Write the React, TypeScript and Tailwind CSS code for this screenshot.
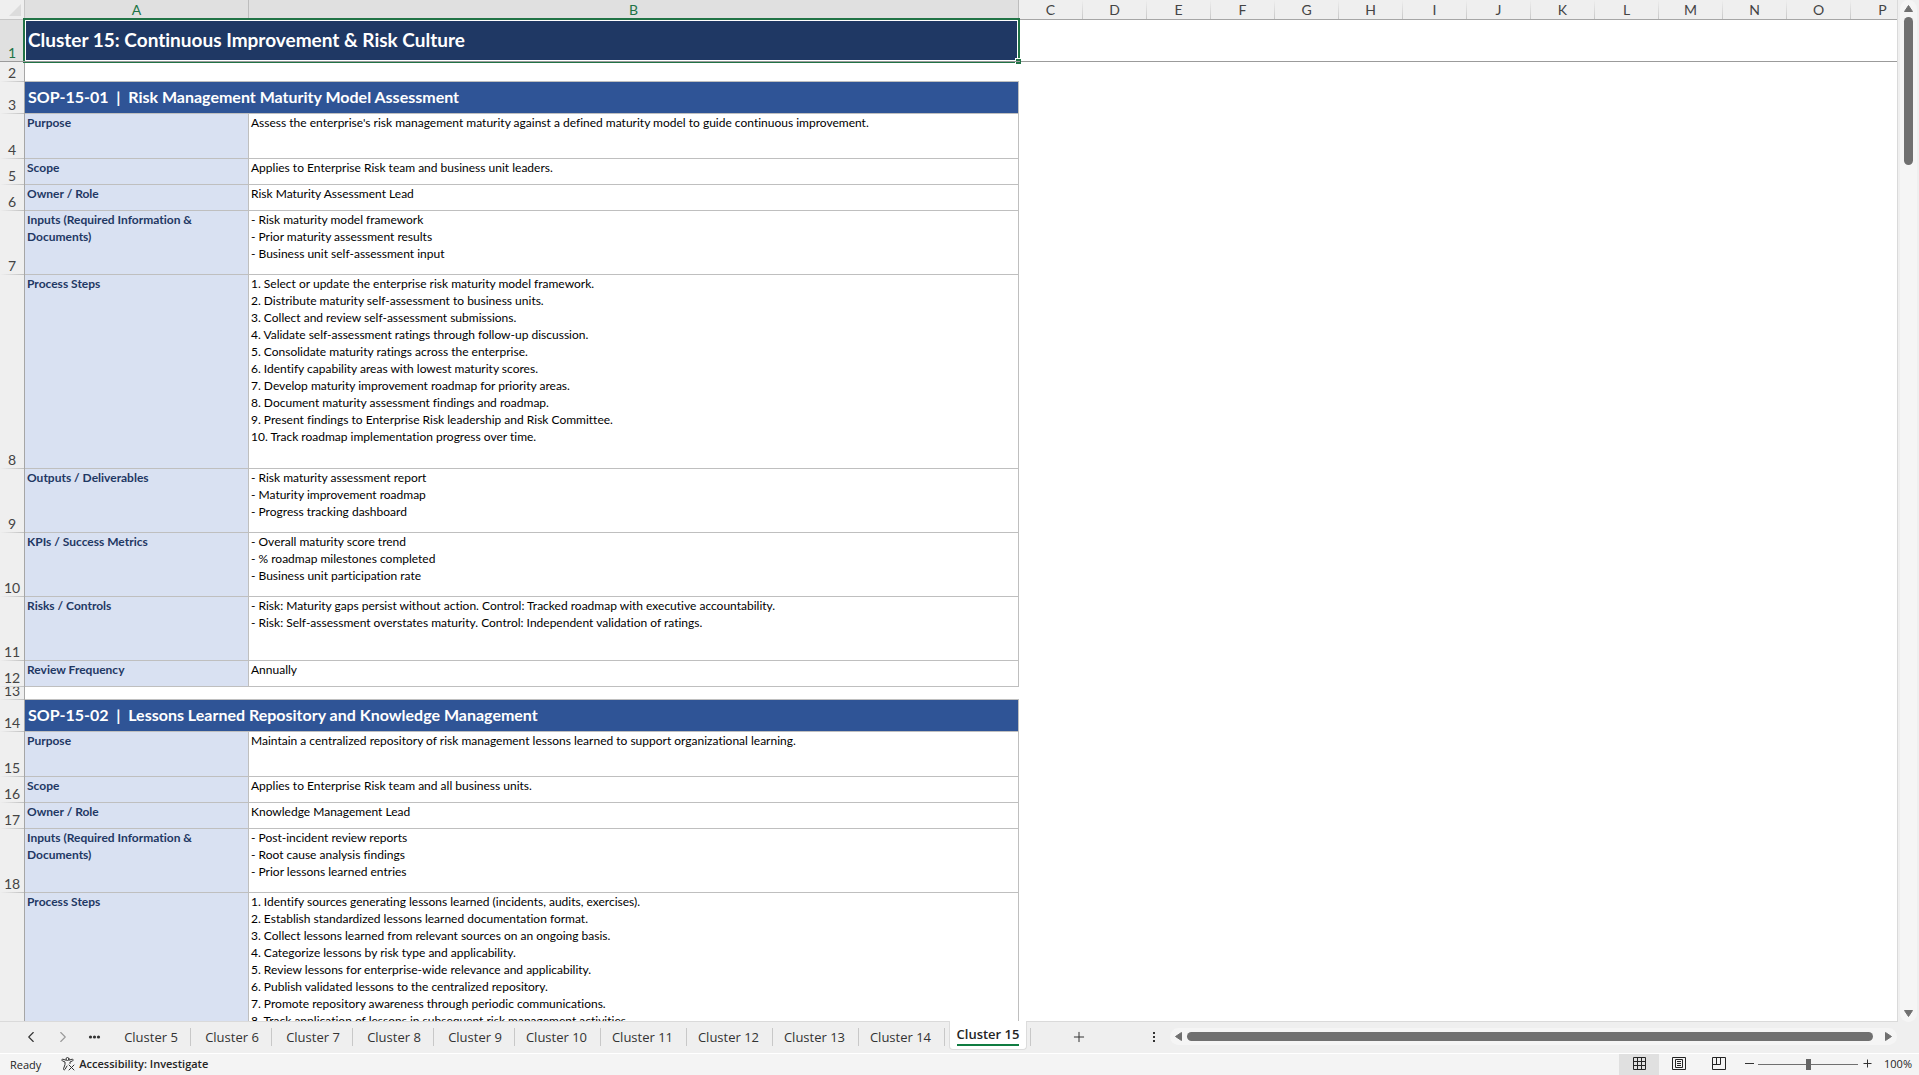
import { ChevronLeft, ChevronRight, Plus } from 'lucide-react'
import { clsx } from 'clsx'

interface Field {
  label: string
  lines: string[]
  height: string
}

interface Sop {
  id: string
  title: string
  firstRow: number
  fields: Field[]
}

const columns = ['C', 'D', 'E', 'F', 'G', 'H', 'I', 'J', 'K', 'L', 'M', 'N', 'O', 'P']

const sheets = [5, 6, 7, 8, 9, 10, 11, 12, 13, 14, 15]
const activeSheet = 15

const sops: Sop[] = [
  {
    id: 'SOP-15-01',
    title: 'Risk Management Maturity Model Assessment',
    firstRow: 3,
    fields: [
      {
        label: 'Purpose',
        lines: [
          "Assess the enterprise's risk management maturity against a defined maturity model to guide continuous improvement."
        ],
        height: 'h-[45px]'
      },
      { label: 'Scope', lines: ['Applies to Enterprise Risk team and business unit leaders.'], height: 'h-[26px]' },
      { label: 'Owner / Role', lines: ['Risk Maturity Assessment Lead'], height: 'h-[26px]' },
      {
        label: 'Inputs (Required Information & Documents)',
        lines: ['- Risk maturity model framework', '- Prior maturity assessment results', '- Business unit self-assessment input'],
        height: 'h-16'
      },
      {
        label: 'Process Steps',
        lines: [
          '1. Select or update the enterprise risk maturity model framework.',
          '2. Distribute maturity self-assessment to business units.',
          '3. Collect and review self-assessment submissions.',
          '4. Validate self-assessment ratings through follow-up discussion.',
          '5. Consolidate maturity ratings across the enterprise.',
          '6. Identify capability areas with lowest maturity scores.',
          '7. Develop maturity improvement roadmap for priority areas.',
          '8. Document maturity assessment findings and roadmap.',
          '9. Present findings to Enterprise Risk leadership and Risk Committee.',
          '10. Track roadmap implementation progress over time.'
        ],
        height: 'h-[194px]'
      },
      {
        label: 'Outputs / Deliverables',
        lines: ['- Risk maturity assessment report', '- Maturity improvement roadmap', '- Progress tracking dashboard'],
        height: 'h-16'
      },
      {
        label: 'KPIs / Success Metrics',
        lines: ['- Overall maturity score trend', '- % roadmap milestones completed', '- Business unit participation rate'],
        height: 'h-16'
      },
      {
        label: 'Risks / Controls',
        lines: [
          '- Risk: Maturity gaps persist without action. Control: Tracked roadmap with executive accountability.',
          '- Risk: Self-assessment overstates maturity. Control: Independent validation of ratings.'
        ],
        height: 'h-16'
      },
      { label: 'Review Frequency', lines: ['Annually'], height: 'h-[26px]' }
    ]
  },
  {
    id: 'SOP-15-02',
    title: 'Lessons Learned Repository and Knowledge Management',
    firstRow: 14,
    fields: [
      {
        label: 'Purpose',
        lines: ['Maintain a centralized repository of risk management lessons learned to support organizational learning.'],
        height: 'h-[45px]'
      },
      { label: 'Scope', lines: ['Applies to Enterprise Risk team and all business units.'], height: 'h-[26px]' },
      { label: 'Owner / Role', lines: ['Knowledge Management Lead'], height: 'h-[26px]' },
      {
        label: 'Inputs (Required Information & Documents)',
        lines: ['- Post-incident review reports', '- Root cause analysis findings', '- Prior lessons learned entries'],
        height: 'h-16'
      },
      {
        label: 'Process Steps',
        lines: [
          '1. Identify sources generating lessons learned (incidents, audits, exercises).',
          '2. Establish standardized lessons learned documentation format.',
          '3. Collect lessons learned from relevant sources on an ongoing basis.',
          '4. Categorize lessons by risk type and applicability.',
          '5. Review lessons for enterprise-wide relevance and applicability.',
          '6. Publish validated lessons to the centralized repository.',
          '7. Promote repository awareness through periodic communications.',
          '8. Track application of lessons in subsequent risk management activities.'
        ],
        height: 'h-[194px]'
      }
    ]
  }
]

function RowHeader({ number, height, selected }: { number: number; height: string; selected?: boolean }) {
  return (
    <th
      scope="row"
      className={clsx(
        'p-0 font-normal text-sm border-r border-[#a6a6a6] bg-[length:100%_1px] bg-bottom bg-no-repeat',
        selected
          ? 'bg-[#e0e0e0] text-[#217346] bg-[linear-gradient(#9b9b9b,#9b9b9b)]'
          : 'bg-[#efefef] text-[#444444] bg-[linear-gradient(to_right,#efefef,#c0c0c0)]'
      )}
    >
      <div className={clsx('flex items-end justify-center overflow-hidden pb-px leading-4', height)}>{number}</div>
    </th>
  )
}

function ColumnHeader({ name, selected }: { name: string; selected?: boolean }) {
  return (
    <th
      scope="col"
      className={clsx(
        'h-5 py-0 pl-0 pr-px font-normal text-sm leading-[19px] border-b border-[#a6a6a6] bg-[length:1px_100%] bg-right bg-no-repeat',
        selected
          ? 'bg-[#e0e0e0] text-[#217346] bg-[linear-gradient(#bdbdbd,#bdbdbd)]'
          : 'bg-[#efefef] text-[#444444] bg-[linear-gradient(#efefef,#c8c8c8)]'
      )}
    >
      {name}
    </th>
  )
}

function SopRows({ sop }: { sop: Sop }) {
  return (
    <>
      <tr>
        <RowHeader number={sop.firstRow} height="h-8" />
        <td
          colSpan={2}
          className="px-[3px] pt-0 pb-0.5 align-middle border-b border-r border-[#bfbfbf] bg-[#2f5496] text-base leading-5 font-bold text-white whitespace-pre"
        >
          {`${sop.id}  |  ${sop.title}`}
        </td>
        <td colSpan={columns.length} />
      </tr>
      {sop.fields.map((field, i) => (
        <tr key={field.label}>
          <RowHeader number={sop.firstRow + 1 + i} height={field.height} />
          <td className="px-0.5 py-0 align-top border-b border-r border-[#bfbfbf] bg-[#d9e1f2] text-xs leading-[17px] font-bold text-[#1f3864]">
            {field.label}
          </td>
          <td className="px-0.5 py-0 align-top border-b border-r border-[#bfbfbf] text-xs leading-[17px] text-black">
            {field.lines.map(line => (
              <div key={line}>{line}</div>
            ))}
          </td>
          <td colSpan={columns.length} />
        </tr>
      ))}
    </>
  )
}

function SpacerRow({ number, height }: { number: number; height: string }) {
  return (
    <tr>
      <RowHeader number={number} height={height} />
      <td colSpan={2} className="p-0 border-b border-[#bfbfbf]" />
      <td colSpan={columns.length} />
    </tr>
  )
}

function Sheet() {
  return (
    <table className="table-fixed w-[1915px] border-separate border-spacing-0 bg-white font-[Lato,'Noto_Sans',sans-serif] [font-variant-ligatures:none]">
      <colgroup>
        <col className="w-[25px]" />
        <col className="w-56" />
        <col className="w-[770px]" />
        {columns.map(c => (
          <col key={c} className="w-16" />
        ))}
      </colgroup>
      <thead>
        <tr>
          <td className="h-5 p-0 bg-[#efefef] border-r border-b border-[#c6c6c6]">
            <svg className="ml-[9px]" width="12" height="12" viewBox="0 0 12 12" aria-hidden="true">
              <path d="M12 0v12H0z" fill="#dcdcdc" />
            </svg>
          </td>
          <ColumnHeader name="A" selected />
          <ColumnHeader name="B" selected />
          {columns.map(c => (
            <ColumnHeader key={c} name={c} />
          ))}
        </tr>
      </thead>
      <tbody>
        <tr>
          <RowHeader number={1} height="h-[42px]" selected />
          <td colSpan={2} className="relative px-[3px] pt-0 pb-0.5 align-middle bg-[#1f3864] text-[19px] leading-6 font-bold text-white">
            Cluster 15: Continuous Improvement &amp; Risk Culture
            {/* Selection marquee with fill handle */}
            <div className="absolute -left-0.5 -top-0.5 -right-px -bottom-px border-2 border-[#217346] pointer-events-none">
              <div className="h-full border border-white" />
              <div className="absolute -right-[3px] -bottom-[3px] w-1.5 h-1.5 bg-[#217346] border-l border-t border-white" />
              <div className="absolute -left-0.5 -right-0.5 -bottom-px h-px bg-[#9b9b9b]" />
            </div>
          </td>
          <td colSpan={columns.length} className="border-b border-[#9b9b9b]" />
        </tr>
        <SpacerRow number={2} height="h-5" />
        <SopRows sop={sops[0]} />
        <SpacerRow number={13} height="h-[13px]" />
        <SopRows sop={sops[1]} />
      </tbody>
    </table>
  )
}

function VerticalScroll() {
  return (
    <div className="w-[21px] shrink-0 px-0.5">
      <div className="h-full flex flex-col items-center rounded-full bg-[#f5f5f5] py-[5px]">
        <button aria-label="Scroll up">
          <svg className="block" width="9" height="7" viewBox="0 0 9 7">
            <path d="M4.5 .5l4 6h-8z" fill="#707070" stroke="#707070" strokeLinejoin="round" />
          </svg>
        </button>
        <div className="flex-1 mt-[5px]">
          <div className="w-[9px] h-[148px] rounded-full bg-[#707070]" />
        </div>
        <button aria-label="Scroll down">
          <svg className="block" width="9" height="7" viewBox="0 0 9 7">
            <path d="M4.5 6.5l4-6h-8z" fill="#707070" stroke="#707070" strokeLinejoin="round" />
          </svg>
        </button>
      </div>
    </div>
  )
}

function SheetTab({ number }: { number: number }) {
  if (number === activeSheet) {
    return (
      <button className="relative -mt-px ml-1 mr-[3px] h-[29px] w-[78px] self-start rounded-b border border-t-0 border-[#dcdcdc] bg-white flex justify-center">
        <span className="mt-1 h-[21px] border-b-2 border-[#107c41] text-[13px] leading-[18px] font-semibold text-[#242424]">
          Cluster {number}
        </span>
      </button>
    )
  }
  return (
    <button
      className={clsx(
        'h-[18px] border-r border-[#c8c8c8] text-[13px] leading-[18px] text-[#333333]',
        number < 10 ? 'w-[81px] pl-0.5' : 'w-[86px] pr-0.5'
      )}
    >
      Cluster {number}
    </button>
  )
}

function TabBar() {
  return (
    <div className="h-[31px] shrink-0 flex items-center bg-[#efefef]">
      <button className="ml-[22px] mb-0.5 w-[18px]" aria-label="Previous sheet">
        <ChevronLeft className="w-[18px] h-[18px] text-[#333333]" strokeWidth={1.5} />
      </button>
      <button className="ml-3.5 mb-0.5 w-[18px]" aria-label="Next sheet">
        <ChevronRight className="w-[18px] h-[18px] text-[#999999]" strokeWidth={1.5} />
      </button>
      <button className="ml-4 mb-0.5 w-[13px]" aria-label="More sheets">
        <svg className="block" width="13" height="4" viewBox="0 0 13 4" fill="#333333">
          <circle cx="2.5" cy="2" r="1.6" />
          <circle cx="6.5" cy="2" r="1.6" />
          <circle cx="10.5" cy="2" r="1.6" />
        </svg>
      </button>
      <nav className="ml-[9px] h-full pb-0.5 flex items-center" aria-label="Sheets">
        {sheets.map(n => (
          <SheetTab key={n} number={n} />
        ))}
        <div className="w-px h-[18px] bg-[#c8c8c8]" />
      </nav>
      <button className="ml-10 mb-0.5" aria-label="New sheet">
        <Plus className="w-4 h-4 text-[#333333]" strokeWidth={1.5} />
      </button>
      <svg className="ml-[66px]" width="3" height="11" viewBox="0 0 3 11" fill="#333333" aria-hidden="true">
        <path d="M0 0h2v2H0zM0 4h2v2H0zM0 8h2v2H0z" />
      </svg>
      <div className="ml-[14px] mr-[22px] mb-0.5 flex-1 h-[17px] flex items-center rounded-full bg-[#f5f5f5] px-[5px]">
        <button aria-label="Scroll left">
          <svg className="block" width="7" height="9" viewBox="0 0 7 9">
            <path d="M.5 4.5l6-4v8z" fill="#707070" stroke="#707070" strokeLinejoin="round" />
          </svg>
        </button>
        <div className="ml-[5px] mr-3 flex-1 h-[9px] rounded-full bg-[#707070]" />
        <button aria-label="Scroll right">
          <svg className="block" width="7" height="9" viewBox="0 0 7 9">
            <path d="M6.5 4.5l-6-4v8z" fill="#707070" stroke="#707070" strokeLinejoin="round" />
          </svg>
        </button>
      </div>
    </div>
  )
}

function StatusBar() {
  return (
    <footer className="h-[22px] shrink-0 flex items-center border-t border-white bg-[#f4f4f4] text-[11px] leading-4 text-[#242424]">
      <span className="ml-2.5">Ready</span>
      <button className="ml-5 mb-0.5 flex items-center gap-1 font-semibold">
        <svg width="14" height="14" viewBox="0 0 14 14" fill="none" stroke="#333333" strokeLinecap="round" strokeLinejoin="round">
          <circle cx="6.5" cy="2" r="1.5" />
          <path d="M5 3.2 1.8 2.2C.8 2 .4 3.4 1.3 3.8L4 5v2.5l-1.5 4.3c-.3 1 1 1.5 1.5.6L6 9M8 3.2l3.2-1c1-.2 1.4 1.2.5 1.6L9 5v1.5M8 8l5 5M13 8l-5 5" />
        </svg>
        Accessibility: Investigate
      </button>
      <div className="ml-auto h-full flex items-center">
        <button className="w-10 h-full pb-0.5 flex items-center justify-center bg-[#e0e0e0]" aria-label="Normal view">
          <svg width="13" height="13" viewBox="0 0 13 13" fill="none" stroke="#242424">
            <path d="M.5.5h12v12H.5zM4.5.5v12M8.5.5v12M.5 4.5h12M.5 8.5h12" />
          </svg>
        </button>
        <button className="w-10 h-full pb-0.5 flex items-center justify-center" aria-label="Page layout view">
          <svg width="14" height="13" viewBox="0 0 14 13" fill="none" stroke="#242424">
            <path d="M.5.5h13v12H.5zM3.5 2.5h7v8h-7zM5 4.5h4M5 6.5h4M5 8.5h4" />
          </svg>
        </button>
        <button className="w-10 h-full pb-0.5 flex items-center justify-center" aria-label="Page break preview">
          <svg width="14" height="13" viewBox="0 0 14 13" fill="none" stroke="#242424">
            <path d="M.5.5h13v12H.5zM.5 7.5h8v-7M4.5.5v7" />
          </svg>
        </button>
        <button className="ml-[5px] w-[11px] h-full pb-0.5 flex items-center justify-center" aria-label="Zoom out">
          <span className="w-[9px] h-px bg-[#333333]" />
        </button>
        <input
          type="range"
          min={0}
          max={200}
          defaultValue={100}
          aria-label="Zoom"
          className="ml-[3px] w-[100px] h-[11px] appearance-none bg-[linear-gradient(#707070,#707070)] bg-[length:100%_1px] bg-center bg-no-repeat [&::-webkit-slider-thumb]:appearance-none [&::-webkit-slider-thumb]:w-[5px] [&::-webkit-slider-thumb]:h-[11px] [&::-webkit-slider-thumb]:bg-[#666666]"
        />
        <button className="ml-1 w-[11px] h-full pb-0.5 flex items-center justify-center" aria-label="Zoom in">
          <svg width="9" height="9" viewBox="0 0 9 9" stroke="#333333">
            <path d="M4.5.5v8M.5 4.5h8" />
          </svg>
        </button>
        <button className="ml-1 mb-0.5 w-[42px] text-center">100%</button>
      </div>
    </footer>
  )
}

export default function App() {
  return (
    <div className="h-screen flex flex-col overflow-hidden bg-[#efefef] font-['Open_Sans','Noto_Sans',sans-serif]">
      <div className="flex-1 min-h-0 flex">
        <main className="flex-1 min-w-0 overflow-hidden bg-white border-r border-b border-[#dadada]">
          <Sheet />
        </main>
        <VerticalScroll />
      </div>
      <TabBar />
      <StatusBar />
    </div>
  )
}
